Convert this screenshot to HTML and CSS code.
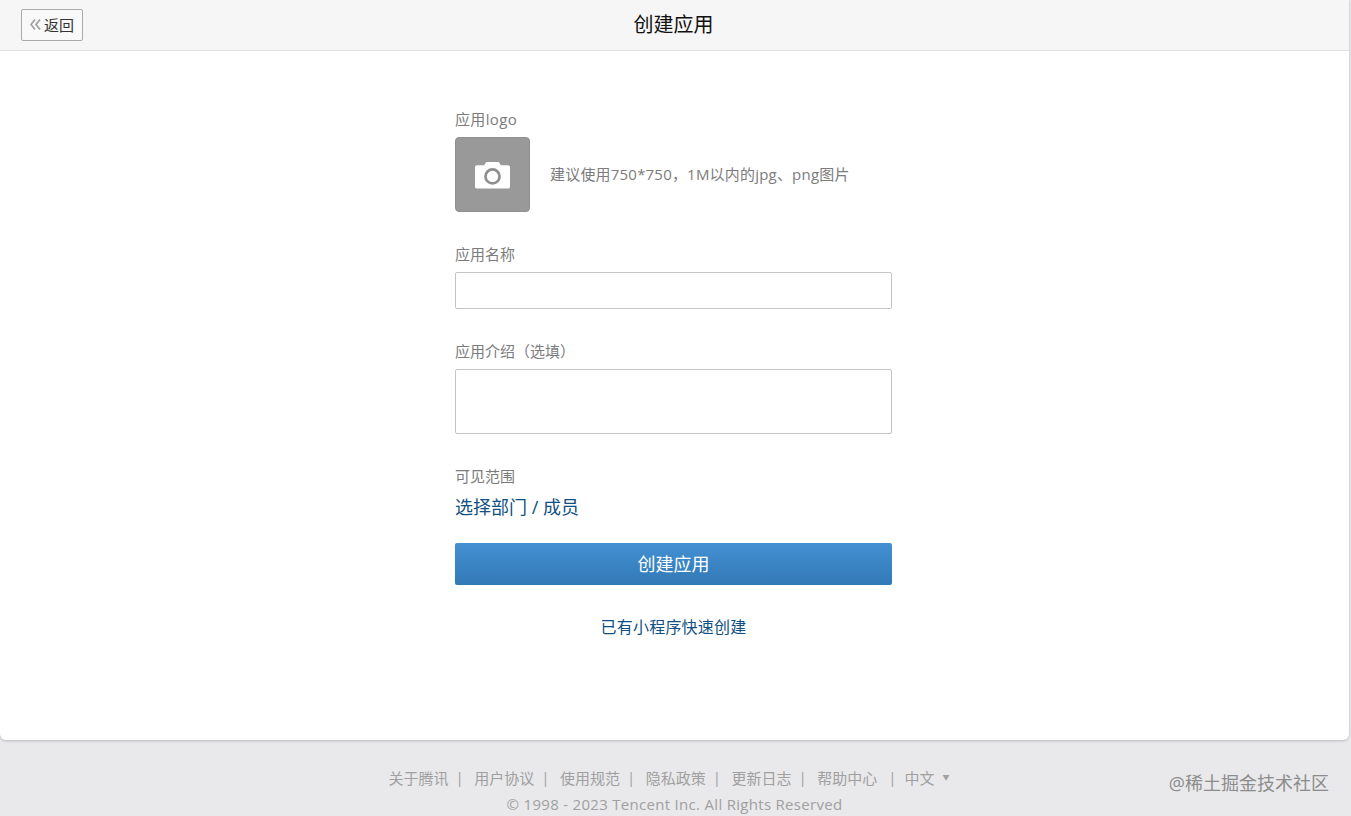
FILE: index.html
```html
<!DOCTYPE html>
<html lang="zh">
<head>
<meta charset="utf-8">
<title>创建应用</title>
<link rel="stylesheet" href="styles.css">
</head>
<body>
<main class="card">
  <header class="topbar">
    <a class="back"><svg class="back-icon" viewBox="0 0 11 11" width="11" height="11"><path d="M5 .5 1 5.500l4 5M10 .5 6 5.500l4 5" fill="none" stroke="#a0a0a0" stroke-width="1.700"/></svg>返回</a>
    <h1 class="title">创建应用</h1>
  </header>
  <form class="form">
    <div class="label label-logo">应用logo</div>
    <div class="logo-row">
      <div class="logo-box">
        <svg viewBox="0 0 36 28" width="35" height="28"><path d="M2 4h7.500l2-3.500h13l2 3.500H34a2 2 0 0 1 2 2v20a2 2 0 0 1-2 2H2a2 2 0 0 1-2-2V6a2 2 0 0 1 2-2z" fill="#fff"/><circle cx="18" cy="15.500" r="7.200" fill="none" stroke="#8f8f8f" stroke-width="2.800"/></svg>
      </div>
      <span class="logo-hint">建议使用750*750，1M以内的jpg、png图片</span>
    </div>
    <div class="label label-name">应用名称</div>
    <div class="input"></div>
    <div class="label label-intro">应用介绍（选填）</div>
    <div class="textarea"></div>
    <div class="label label-scope">可见范围</div>
    <a class="scope-link">选择部门 / 成员</a>
    <div class="submit">创建应用</div>
    <a class="quick">已有小程序快速创建</a>
  </form>
</main>
<footer class="footer">
  <nav class="foot-links">
    <a>关于腾讯</a><i>|</i><a>用户协议</a><i>|</i><a>使用规范</a><i>|</i><a>隐私政策</a><i>|</i><a>更新日志</a><i>|</i><a>帮助中心</a><i class="last">|</i><a>中文</a><span class="caret">▼</span>
  </nav>
  <div class="copy">© 1998 - 2023 Tencent Inc. All Rights Reserved</div>
</footer>
<div class="watermark">@稀土掘金技术社区</div>
</body>
</html>
```
FILE: styles.css
```css
* { box-sizing: border-box; }
html, body { margin: 0; height: 816px; overflow: hidden; }
body {
  background: #e9e9eb;
  font-family: "Open Sans", "Noto Sans CJK SC", sans-serif;
  color: #333;
  position: relative;
}
.card {
  width: 1349px;
  height: 740px;
  background: #fff;
  border-radius: 0 0 6px 6px;
  box-shadow: 0 1px 3px rgba(0, 0, 0, .2);
  overflow: hidden;
}
.topbar {
  height: 51px;
  background: #f6f6f6;
  border-bottom: 1px solid #e2e2e2;
  padding-left: 21px;
  display: flex;
  align-items: center;
  position: relative;
}
.back {
  width: 62px;
  height: 32px;
  border: 1px solid #aaa;
  border-radius: 2px;
  display: flex;
  align-items: center;
  padding-left: 8px;
  gap: 3px;
  font-size: 15px;
  line-height: 28px;
  color: #333;
  margin-top: -1px;
  background: #f9f9f9;
}
.title {
  position: absolute;
  left: 0;
  right: 2px;
  top: 12px;
  margin: 0;
  text-align: center;
  font-size: 20px;
  line-height: 26px;
  font-weight: 400;
  color: #111;
}
.form {
  width: 437px;
  margin-left: 455px;
  display: flex;
  flex-direction: column;
  align-items: flex-start;
}
.label {
  font-size: 15px;
  line-height: 20px;
  color: #7c7c7c;
}
.label-logo { margin-top: 58px; letter-spacing: .35px; }
.logo-row {
  display: flex;
  align-items: center;
  gap: 20px;
  margin-top: 8px;
}
.logo-box {
  width: 75px;
  height: 75px;
  background: #999;
  border: 1px solid #8f8f8f;
  border-radius: 4px;
  display: flex;
  align-items: center;
  justify-content: center;
}
.logo-hint { font-size: 15px; line-height: 20px; letter-spacing: .2px; color: #7c7c7c; margin-bottom: 1px; }
.label-name { margin-top: 32px; }
.input {
  width: 437px;
  height: 37px;
  margin-top: 8px;
  border: 1px solid #c4c4c4;
  border-radius: 2px;
}
.label-intro { margin-top: 32px; }
.textarea {
  width: 437px;
  height: 65px;
  margin-top: 8px;
  border: 1px solid #c4c4c4;
  border-radius: 2px;
}
.label-scope { margin-top: 32px; }
.scope-link {
  margin-top: 8px;
  font-size: 18px;
  line-height: 26px;
  color: #0f4f83;
}
.submit {
  width: 437px;
  height: 42px;
  margin-top: 23px;
  border-radius: 2px;
  background: linear-gradient(#4390d3, #3279b5);
  color: #fff;
  font-size: 18px;
  line-height: 42px;
  text-align: center;
}
.quick {
  align-self: center;
  margin-top: 32px;
  font-size: 16px;
  line-height: 20px;
  letter-spacing: .2px;
  color: #0f4f83;
}
.footer {
  padding-top: 26px;
  color: #a0a0a0;
  font-size: 15px;
  text-align: center;
}
.foot-links {
  display: flex;
  justify-content: center;
  align-items: center;
  height: 22px;
  padding-right: 13px;
}
.foot-links i { font-style: normal; margin: 0 10.5px 0 7px; }
.foot-links i.last { margin: 0 8px 0 11px; }
.caret { font-size: 7px; margin-left: 8px; color: #a0a0a0; }
.copy {
  font-size: 15px;
  line-height: 20px;
  letter-spacing: .3px;
  margin-top: 6px;
  padding-right: 2px;
  white-space: nowrap;
}
.watermark {
  position: absolute;
  right: 22px;
  top: 770px;
  font-size: 18px;
  line-height: 26px;
  color: #8c8c8c;
}
```
